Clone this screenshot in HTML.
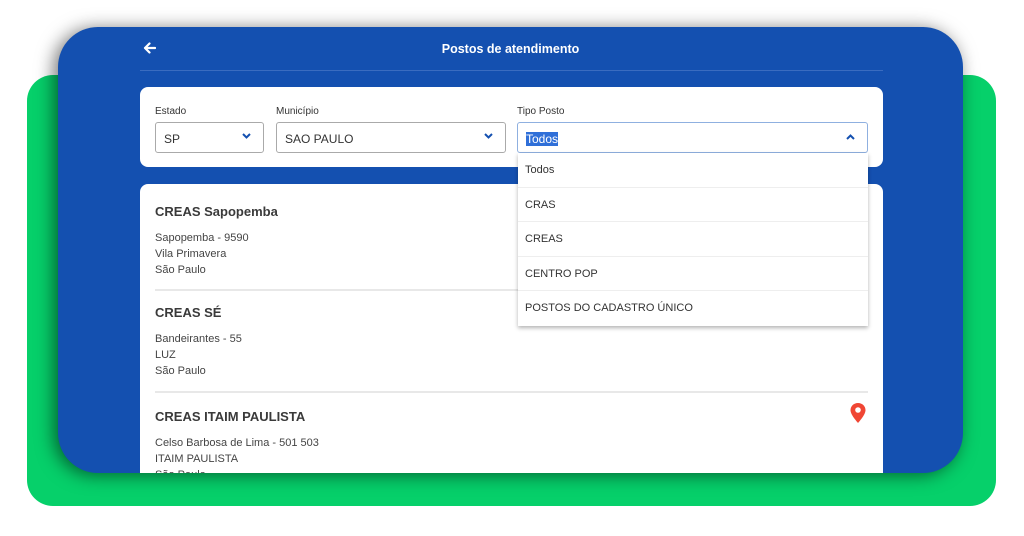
<!DOCTYPE html>
<html><head><meta charset="utf-8"><style>
*{margin:0;padding:0;box-sizing:border-box}
body{width:1024px;height:536px;background:#fff;position:relative;overflow:hidden;font-family:"Liberation Sans",sans-serif;color:#333}
.green{position:absolute;left:27px;top:75px;width:969px;height:431px;background:#06d06a;border-radius:26px}
.blue{position:absolute;left:58px;top:27px;width:905px;height:446px;background:#1450b0;border-radius:40px;overflow:hidden;box-shadow:-4px 2px 18px rgba(0,0,0,.55)}
.abs{position:absolute}
.title{left:0;width:905px;top:15px;text-align:center;color:#fff;font-weight:bold;font-size:12.5px}
.hr{left:82px;top:43px;width:743px;height:1px;background:#3a6cc0}
.card{left:82px;top:60px;width:743px;height:80px;background:#fff;border-radius:8px}
.lbl{font-size:10px;color:#333}
.sel{border:1px solid #aaa;border-radius:3px;height:31px;font-size:12px;padding:9px 8px;color:#333}
.sel svg{position:absolute;right:12px;top:10px}
.list{left:82px;top:157px;width:743px;height:300px;background:#fff;border-radius:8px 8px 0 0}
.item h3{font-size:13px;font-weight:bold;color:#3a3a3a;margin-bottom:11px}
.item p{font-size:11px;line-height:16px;color:#444}
.sep{height:2px;background:#e8e8e8}
.dd{left:460px;top:126px;width:350px;background:#fff;box-shadow:0 2px 4px rgba(0,0,0,.3)}
.dd div{height:34.5px;border-bottom:1.5px solid #eee;font-size:11px;padding:11px 7px 0;color:#333}
</style></head><body>
<div class="green"></div>
<div class="blue">
 <svg class="abs" style="left:85px;top:15px" width="13" height="12" viewBox="0 0 13 12"><path d="M12 6H2M6.5 1.5 2 6l4.5 4.5" stroke="#fff" stroke-width="2.2" fill="none" stroke-linecap="round" stroke-linejoin="round"/></svg>
 <div class="abs title">Postos de atendimento</div>
 <div class="abs hr"></div>
 <div class="abs card">
  <div class="abs lbl" style="left:15px;top:19px">Estado</div>
  <div class="abs sel" style="left:15px;top:35px;width:109px">SP<svg width="9" height="6" viewBox="0 0 9 6"><path d="M1 1l3.5 3.5L8 1" stroke="#1450b0" stroke-width="2" fill="none"/></svg></div>
  <div class="abs lbl" style="left:136px;top:19px">Município</div>
  <div class="abs sel" style="left:136px;top:35px;width:230px">SAO PAULO<svg width="9" height="6" viewBox="0 0 9 6"><path d="M1 1l3.5 3.5L8 1" stroke="#1450b0" stroke-width="2" fill="none"/></svg></div>
  <div class="abs lbl" style="left:377px;top:19px">Tipo Posto</div>
  <div class="abs sel" style="left:377px;top:35px;width:351px;border-color:#8fb0e0"><span style="background:#2f6fd8;color:#fff">Todos</span><svg width="9" height="6" viewBox="0 0 9 6" style="top:11px"><path d="M1 5l3.5-3.5L8 5" stroke="#1450b0" stroke-width="2" fill="none"/></svg></div>
 </div>
 <div class="abs list">
  <div style="padding:20px 15px 0">
   <div class="item"><h3>CREAS Sapopemba</h3><p>Sapopemba - 9590<br>Vila Primavera<br>São Paulo</p></div>
   <div class="sep" style="margin:11px 0 14px"></div>
   <div class="item"><h3>CREAS SÉ</h3><p>Bandeirantes - 55<br>LUZ<br>São Paulo</p></div>
   <div class="sep" style="margin:12px 0 16px"></div>
   <div class="item"><h3>CREAS ITAIM PAULISTA</h3><p>Celso Barbosa de Lima - 501 503<br>ITAIM PAULISTA<br>São Paulo</p></div>
  </div>
  <svg class="abs" style="left:709px;top:218px" width="18" height="22" viewBox="0 0 18 22"><path d="M9 1C4.6 1 1.5 4.2 1.5 8.3 1.5 13 9 21 9 21s7.5-8 7.5-12.7C16.5 4.2 13.4 1 9 1z" fill="#f04634"/><circle cx="9" cy="8" r="2.8" fill="#fff"/></svg>
 </div>
 <div class="abs dd">
  <div>Todos</div><div>CRAS</div><div>CREAS</div><div>CENTRO POP</div><div style="border:none">POSTOS DO CADASTRO ÚNICO</div>
 </div>
</div>
</body></html>
